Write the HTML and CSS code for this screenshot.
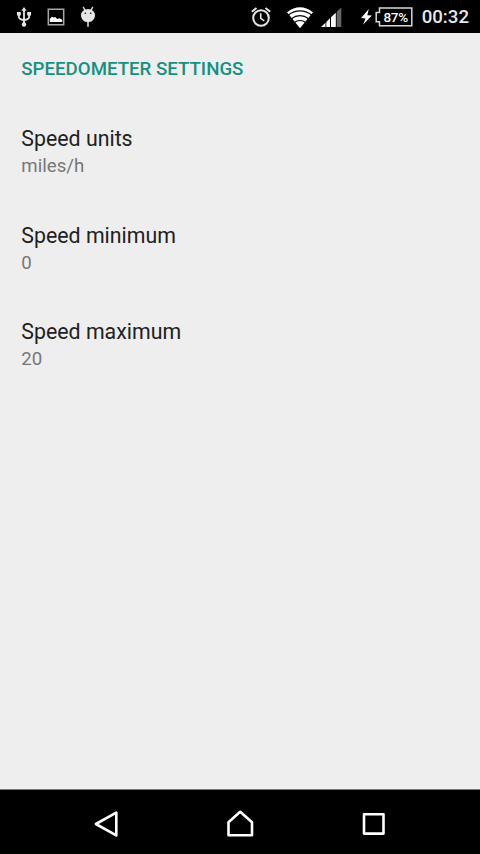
FILE: index.html
```html
<!DOCTYPE html>
<html lang="en">
<head>
<meta charset="utf-8">
<title>Speedometer settings</title>
<link rel="stylesheet" href="styles.css">
</head>
<body>
<header class="status">
  <div class="group notifications">
    <svg width="16" height="22" viewBox="0 0 16 22" fill="none" stroke="#e6e6e6" stroke-width="1.8">
      <path d="M8 3v16M2.800 8v2.500q0 3 5.200 3.500M13.200 8v2.500q0 3-5.200 3.500"/>
      <path d="M5.400 4.700 8 1l2.600 3.700zM1 6h3.800v3.600H1zM11.200 6H15v3.600h-3.800z" fill="#e6e6e6" stroke="none"/>
      <circle cx="8" cy="18.500" r="2.200" fill="#e6e6e6" stroke="none"/>
    </svg>
    <svg width="18" height="18" viewBox="0 0 18 18">
      <path d="M1.300 1.300h15.400v15.400H1.300z" fill="none" stroke="#a6a6a6" stroke-width="1.500"/>
      <path d="M2.800 14V11l2-2.200 2 .8L8.200 9l2 2 2.200-.8 2.800 1.500V14z" fill="#fff"/>
    </svg>
    <svg width="16" height="22" viewBox="0 0 16 22">
      <path d="M3.500 1.500 5.500 5M12.500 1.500 10.500 5M8 15v5.200" stroke="#e6e6e6" stroke-width="1.500" stroke-linecap="round"/>
      <path d="M1 9.300a7 6.300 0 0 1 14 0c0 4.200-3.400 7-7 7s-7-2.800-7-7z" fill="#e6e6e6"/>
      <circle cx="5.300" cy="7.300" r=".8"/><circle cx="10.700" cy="7.300" r=".8"/>
    </svg>
  </div>
  <div class="group system">
    <svg class="alarm" width="20" height="22" viewBox="0 0 20 22" fill="none" stroke="#e6e6e6">
      <circle cx="10" cy="12" r="7.800" stroke-width="2"/>
      <path d="M9.700 7.300v5l3.600 2.500" stroke-width="1.600"/>
      <path d="M.8 5.700 5.500 2M19.200 5.700 14.500 2" stroke-width="2"/>
    </svg>
    <svg class="wifi" width="28" height="23" viewBox="0 0 28 23">
      <path d="M1 6.200Q14-3.500 27 6.200L14 22.300z" fill="#fff"/>
      <path d="M2 9.200Q14 .6 26 9.200M5 13Q14 6.300 23 13M8 16.700Q14 12.300 20 16.700" fill="none" stroke="#000" stroke-width="1.150"/>
    </svg>
    <svg class="signal" width="21" height="20" viewBox="0 0 21 20">
      <path d="M0 20l4.500-4.300V20zM5.300 14.900 9 11.300V20H5.300zM10 10.300 14.800 5.700V20H10z" fill="#fff"/>
      <path d="M9.500 10v10" stroke="#000" stroke-width=".8"/>
      <path d="M15.700 4.800 20.300.4V20h-4.600z" fill="#666"/>
    </svg>
    <svg class="bolt" width="11" height="16" viewBox="0 0 11 16"><path d="M7.800 0 .1 8.900l4.400.5L2 15.800l8.900-9.200-4.600-.4z" fill="#fff"/></svg>
    <div class="battery">
      <svg width="38" height="20" viewBox="0 0 38 20" fill="none" stroke="#d8d8d8" stroke-width="1.500"><path d="M4.500 1h32.300v17.800H4.500v-4H1.200V5.500h3.300z"/></svg>
      <span class="level">87%</span>
    </div>
    <time class="clock">00:32</time>
  </div>
</header>
<main class="settings">
  <h1 class="category">SPEEDOMETER SETTINGS</h1>
  <ul class="list">
    <li class="item"><div class="title">Speed units</div><div class="summary">miles/h</div></li>
    <li class="item"><div class="title">Speed minimum</div><div class="summary">0</div></li>
    <li class="item"><div class="title">Speed maximum</div><div class="summary">20</div></li>
  </ul>
</main>
<nav class="navbar">
  <svg width="28" height="28" viewBox="0 0 28 28"><path d="M2.900 14 23.300 2.600v22.800z"/></svg>
  <svg width="28" height="28" viewBox="0 0 28 28"><path d="M2.500 12.200 14.200 1.800l11.800 10.400v13.100H2.500z"/></svg>
  <svg width="28" height="28" viewBox="0 0 28 28"><path d="M4 4.300h19.500v19.300H4z"/></svg>
</nav>
</body>
</html>
```
FILE: styles.css
```css
* { box-sizing: border-box; }
body {
  margin: 0;
  height: 854px;
  display: flex;
  flex-direction: column;
  background: #eee;
  font-family: Roboto, "Liberation Sans", sans-serif;
  overflow: hidden;
}
svg { display: block; flex: none; }
.status {
  flex: none;
  height: 33px;
  display: flex;
  justify-content: space-between;
  padding: 0 11px 0 16px;
  background: #000;
}
.group { display: flex; align-items: center; }
.notifications { gap: 15px; }
.alarm { margin-right: 15px; }
.wifi { margin: 2px 7px 0 0; }
.signal { margin: 1px 19px 0 0; }
.bolt { margin-right: 3px; }
.battery { display: grid; margin-right: 9px; }
.battery > * { grid-area: 1 / 1; }
.level {
  padding-left: 4px;
  text-align: center;
  font-size: 13.5px;
  letter-spacing: -0.3px;
  line-height: 20px;
  font-weight: 500;
  color: #fff;
}
.clock {
  font-size: 18.67px;
  line-height: 33px;
  padding-top: 2px;
  font-weight: 500;
  color: #e8e8e8;
}
.settings { flex: 1; padding: 18px 21.33px 0; }
.category {
  margin: 0 0 38px;
  font-size: 18.67px;
  line-height: 36px;
  font-weight: 500;
  color: #16917f;
}
.list { margin: 0; padding: 0; list-style: none; }
.item { height: 96.67px; }
.title { font-size: 21.33px; line-height: 28px; color: #212121; }
.summary { font-size: 18.67px; line-height: 26px; color: #777; }
.navbar {
  flex: none;
  height: 65px;
  display: flex;
  justify-content: center;
  align-items: center;
  gap: 105.500px;
  padding-top: 4px;
  background: #000;
  border-top: 1px solid #777;
}
.navbar path { fill: none; stroke: #fff; stroke-width: 2.600; stroke-linejoin: round; }
```
